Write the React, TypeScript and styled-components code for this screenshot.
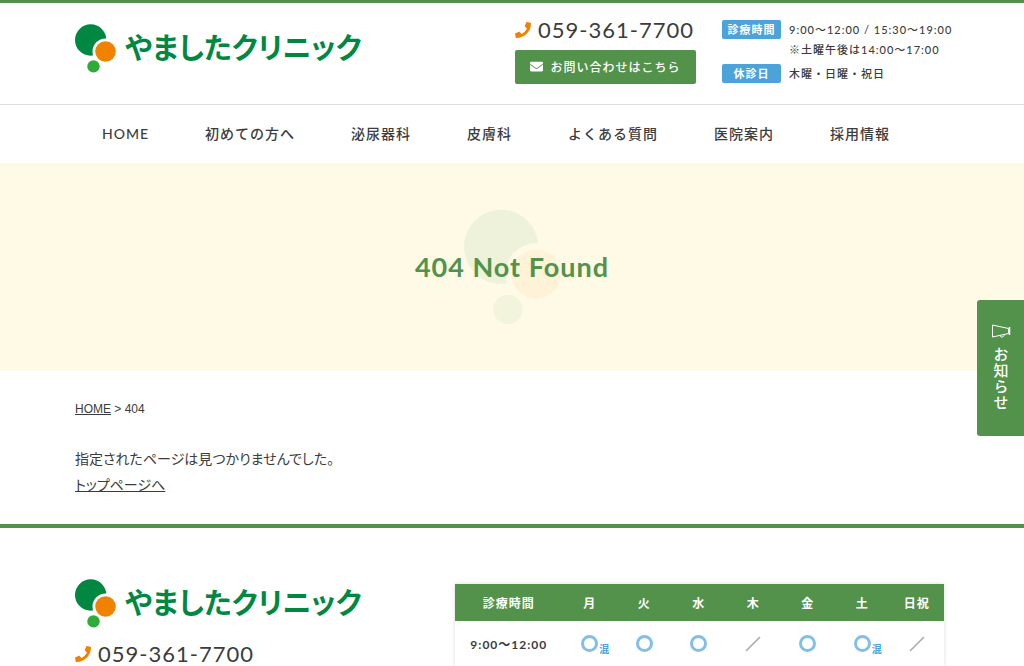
import React from "react";
import styled, { createGlobalStyle } from "styled-components";
import { FaEnvelope, FaPhone } from "react-icons/fa";

const green = "#53924b";
const blue = "#4ba3da";
const orange = "#f18200";
const ink = "#3c3c3c";
const cream = "#fffae6";
const rounded = `Lato, "Noto Sans CJK JP", sans-serif`;

const GlobalStyle = createGlobalStyle`
  *, *::before, *::after { box-sizing: border-box; }
  body {
    margin: 0;
    background: #fff;
    color: ${ink};
    font-family: "Noto Sans CJK JP", sans-serif;
    font-size: 14px;
    overflow-x: hidden;
  }
  a { color: inherit; }
  p, h1, dl, dd, ul { margin: 0; padding: 0; }
`;

const Header = styled.header`
  border-top: 3px solid ${green};
`;

const HeaderTop = styled.div`
  display: flex;
  align-items: flex-start;
  gap: 26px;
  height: 102px;
  padding: 15px 75px 0;
  border-bottom: 1px solid #ddd;
`;

const LogoSlot = styled.div`
  flex: 1;
  padding-top: 6px;
`;

const LogoLink = styled.a`
  display: flex;
  align-items: center;
  gap: 9px;
  width: fit-content;
  color: #008842;
  text-decoration: none;
  white-space: nowrap;
`;

const LogoText = styled.span`
  padding-bottom: 4px;
  font-size: 29px;
  font-weight: 700;
  line-height: 45px;
  font-feature-settings: "palt";
`;

const Contact = styled.div`
  width: 181px;
`;

const Phone = styled.a`
  display: flex;
  align-items: center;
  gap: 7px;
  font-family: ${rounded};
  font-size: 22px;
  line-height: 24px;
  letter-spacing: 1px;
  text-decoration: none;
  white-space: nowrap;
  svg {
    flex: none;
    color: ${orange};
    font-size: 16px;
  }
`;

const ContactButton = styled.a`
  display: flex;
  align-items: center;
  justify-content: center;
  gap: 7px;
  height: 34px;
  margin-top: 8px;
  padding-bottom: 1px;
  border-radius: 2px;
  background: ${green};
  color: #fff;
  font-size: 12px;
  font-weight: 500;
  letter-spacing: 1px;
  text-decoration: none;
  white-space: nowrap;
  svg { font-size: 13px; }
`;

const Hours = styled.dl`
  display: grid;
  grid-template-columns: 59px 160px;
  column-gap: 8px;
  row-gap: 4px;
  width: 227px;
  padding-top: 2px;
  font-family: ${rounded};
  font-size: 11px;
  font-weight: 500;
  line-height: 20px;
  letter-spacing: 1px;
  white-space: nowrap;
`;

const HoursLabel = styled.dt`
  align-self: start;
  border-radius: 2px;
  background: ${blue};
  color: #fff;
  font-weight: 700;
  line-height: 19px;
  text-align: center;
`;

const NavList = styled.ul`
  display: flex;
  align-items: center;
  gap: 56px;
  height: 58px;
  padding: 0 102px 2px;
  list-style: none;
  a {
    font-family: ${rounded};
    font-size: 14px;
    font-weight: 500;
    letter-spacing: 1px;
    text-decoration: none;
    white-space: nowrap;
  }
`;

const Hero = styled.section`
  display: grid;
  place-items: center;
  height: 208px;
  background: ${cream};
  > * { grid-area: 1 / 1; }
`;

const HeroTitle = styled.h1`
  z-index: 1;
  color: ${green};
  font-family: ${rounded};
  font-size: 27px;
  font-weight: 700;
  letter-spacing: 1px;
  line-height: 40px;
`;

const Watermark = styled.div`
  display: flex;
  opacity: 0.06;
`;

const Main = styled.main`
  padding: 28px 75px 27px;
`;

const Breadcrumb = styled.nav`
  margin-bottom: 26px;
  font-family: "Liberation Sans", sans-serif;
  font-size: 12px;
  line-height: 20px;
`;

const Message = styled.p`
  font-size: 14px;
  line-height: 26px;
  font-feature-settings: "palt";
`;

const Footer = styled.footer`
  display: grid;
  grid-template-columns: 380px 1fr;
  padding: 51px 80px 0 75px;
  border-top: 4px solid ${green};
  overflow: hidden;
`;

const FooterPhone = styled.div`
  margin-top: 14px;
`;

const Schedule = styled.table`
  width: 100%;
  height: 82px;
  margin-top: 5px;
  border-collapse: collapse;
  table-layout: fixed;
  box-shadow: 0 0 4px rgba(0, 0, 0, 0.15);
  font-family: ${rounded};
  font-size: 12px;
  font-weight: 700;
  letter-spacing: 1px;
  thead { background: ${green}; color: #fff; }
  thead tr { height: 37px; }
  th, td { padding: 0; text-align: center; font-weight: inherit; }
  th:first-child { width: 22%; }
`;

const Mark = styled.span`
  position: relative;
  display: inline-flex;
  vertical-align: middle;
`;

const Ring = styled.span`
  width: 17px;
  height: 17px;
  border: 3px solid #81bfe7;
  border-radius: 50%;
`;

const Busy = styled.span`
  position: absolute;
  left: 100%;
  bottom: -4px;
  padding-left: 1px;
  color: ${blue};
  font-size: 10px;
  line-height: 14px;
`;

const NewsTab = styled.a`
  position: fixed;
  top: 300px;
  right: 0;
  display: flex;
  flex-direction: column;
  align-items: center;
  gap: 9px;
  width: 47px;
  height: 136px;
  padding-top: 24px;
  border-radius: 3px 0 0 3px;
  background: ${green};
  color: #fff;
  font-size: 15px;
  font-weight: 500;
  letter-spacing: 1px;
  text-decoration: none;
  span { writing-mode: vertical-rl; line-height: 18px; }
`;

function Emblem({ width, gap }: { width: number; gap: string }) {
  return (
    <svg width={width} viewBox="0 0 41 49" aria-hidden="true">
      <circle cx="15.7" cy="16" r="15.7" fill="#008842" />
      <circle cx="30.5" cy="27.5" r="13" fill={gap} />
      <circle cx="30.5" cy="27.5" r="10.3" fill={orange} />
      <circle cx="18.5" cy="42.4" r="6.2" fill="#2fac38" />
    </svg>
  );
}

function Logo() {
  return (
    <LogoLink href="#">
      <Emblem width={41} gap="#fff" />
      <LogoText>やましたクリニック</LogoText>
    </LogoLink>
  );
}

function PhoneNumber() {
  return (
    <Phone href="tel:059-361-7700">
      <FaPhone />
      059-361-7700
    </Phone>
  );
}

type Slot = "open" | "busy" | "closed";

function SlotMark({ slot }: { slot: Slot }) {
  if (slot === "closed") {
    return (
      <Mark>
        <svg width="16" height="16" viewBox="0 0 16 16" role="img" aria-label="休診">
          <path d="M1 15L15 1" stroke="#aaa" strokeWidth="1.6" />
        </svg>
      </Mark>
    );
  }
  return (
    <Mark>
      <Ring />
      {slot === "busy" && <Busy>混</Busy>}
    </Mark>
  );
}

const navItems = ["HOME", "初めての方へ", "泌尿器科", "皮膚科", "よくある質問", "医院案内", "採用情報"];
const days = ["月", "火", "水", "木", "金", "土", "日祝"];
const morning: Slot[] = ["busy", "open", "open", "closed", "open", "busy", "closed"];

export default function App() {
  return (
    <>
      <GlobalStyle />
      <Header>
        <HeaderTop>
          <LogoSlot>
            <Logo />
          </LogoSlot>
          <Contact>
            <PhoneNumber />
            <ContactButton href="#">
              <FaEnvelope />
              お問い合わせはこちら
            </ContactButton>
          </Contact>
          <Hours>
            <HoursLabel>診療時間</HoursLabel>
            <dd>
              9:00〜12:00 / 15:30〜19:00
              <br />
              ※土曜午後は14:00〜17:00
            </dd>
            <HoursLabel>休診日</HoursLabel>
            <dd>木曜・日曜・祝日</dd>
          </Hours>
        </HeaderTop>
        <nav>
          <NavList>
            {navItems.map((item) => (
              <li key={item}>
                <a href="#">{item}</a>
              </li>
            ))}
          </NavList>
        </nav>
      </Header>
      <Hero>
        <Watermark>
          <Emblem width={97} gap={cream} />
        </Watermark>
        <HeroTitle>404 Not Found</HeroTitle>
      </Hero>
      <Main>
        <Breadcrumb>
          <a href="#">HOME</a> &gt; 404
        </Breadcrumb>
        <Message>
          指定されたページは見つかりませんでした。
          <br />
          <a href="#">トップページへ</a>
        </Message>
      </Main>
      <Footer>
        <div>
          <Logo />
          <FooterPhone>
            <PhoneNumber />
          </FooterPhone>
        </div>
        <Schedule>
          <thead>
            <tr>
              <th scope="col">診療時間</th>
              {days.map((day) => (
                <th scope="col" key={day}>{day}</th>
              ))}
            </tr>
          </thead>
          <tbody>
            <tr>
              <th scope="row">9:00〜12:00</th>
              {morning.map((slot, i) => (
                <td key={days[i]}>
                  <SlotMark slot={slot} />
                </td>
              ))}
            </tr>
          </tbody>
        </Schedule>
      </Footer>
      <NewsTab href="#">
        <svg width="20" height="14" viewBox="0 0 20 14" fill="none" stroke="#fff" strokeWidth="1" aria-hidden="true">
          <path d="M1.500 1V13L17.500 9.500V4.500Z" />
          <path d="M18.500 3V11" strokeWidth="1.500" />
          <path d="M9 11.500C9.500 14 13 13.500 13.500 10.500" />
        </svg>
        <span>お知らせ</span>
      </NewsTab>
    </>
  );
}
